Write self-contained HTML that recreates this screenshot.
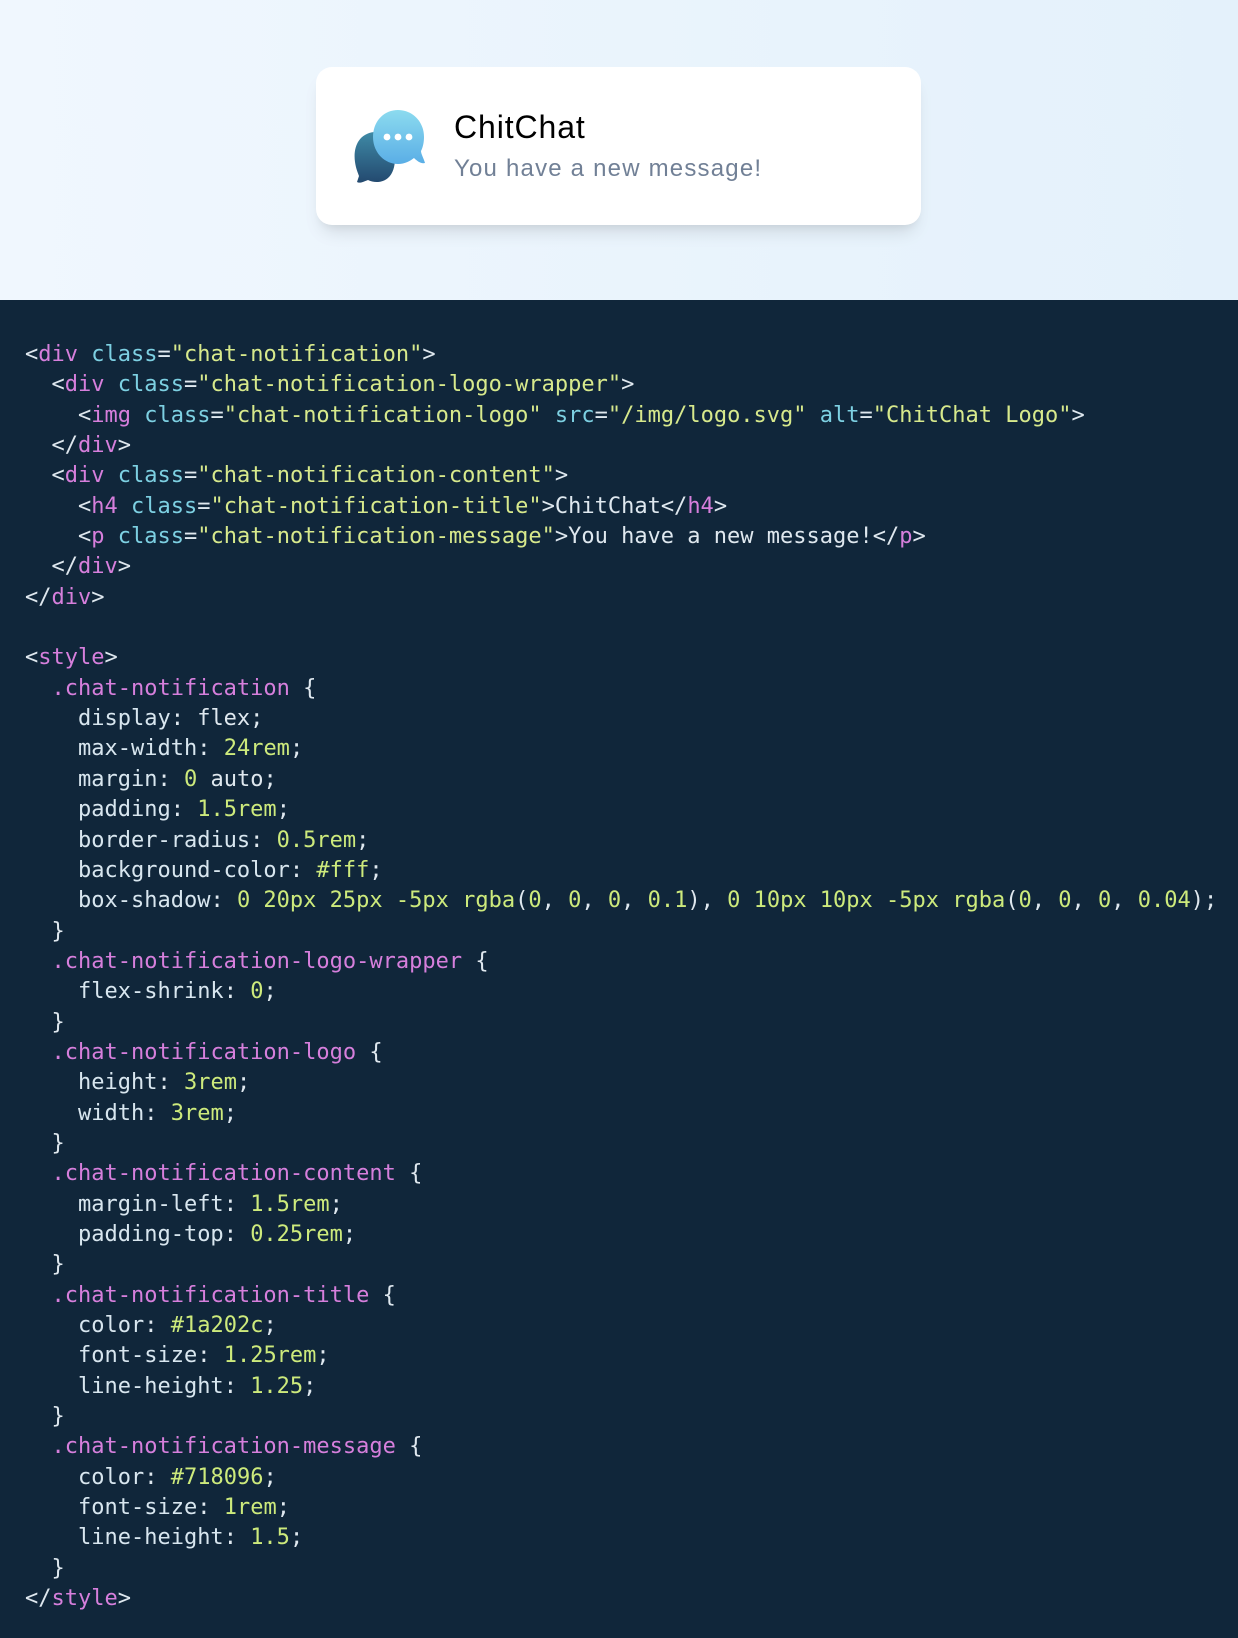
<!DOCTYPE html>
<html><head><meta charset="utf-8"><style>
*{margin:0;padding:0;box-sizing:border-box}
body{width:1238px;height:1638px;overflow:hidden;background:#10263a;font-family:"Liberation Sans",sans-serif}
.top{position:absolute;left:0;top:0;width:1238px;height:300px;background:linear-gradient(90deg,#f0f7fe,#e4f1fb)}
.card{position:absolute;left:316px;top:67px;width:605px;height:158px;background:#fff;border-radius:16px;box-shadow:0 12px 18px -6px rgba(0,0,0,0.12),0 6px 8px -4px rgba(0,0,0,0.05)}
.title{position:absolute;left:454px;top:109px;font-size:32px;letter-spacing:0.9px;color:#000;line-height:36px}
.msg{position:absolute;left:454px;top:154px;font-size:24px;letter-spacing:1.2px;color:#718096;line-height:30px}
pre{position:absolute;left:25px;top:340px;font-family:"DejaVu Sans Mono","Liberation Mono",monospace;font-size:22px;line-height:30.35px;color:#dfe8ef}
.t{color:#d67fdc}.a{color:#7dd0e2}.s{color:#d7e98c}.n{color:#cdea7c}.p{color:#d8e6ef}
</style></head><body>
<div class="top"></div>
<div class="card"></div>
<svg style="position:absolute;left:350px;top:105px" width="82" height="82" viewBox="350 105 82 82">
<defs>
<linearGradient id="g1" x1="0" y1="0" x2="0" y2="1"><stop offset="0" stop-color="#3f8aa6"/><stop offset="1" stop-color="#23496f"/></linearGradient>
<linearGradient id="g2" x1="0" y1="0" x2="0" y2="1"><stop offset="0" stop-color="#8cdbef"/><stop offset="1" stop-color="#5aaee6"/></linearGradient>
</defs>
<path d="M374 132 C358 134 353 148 355 162 C356 169 358 173 359 176 L357 182 C360 184 365 181 368 180 C374 183 382 183 388 178 C395 172 396 160 394 150 Z" fill="url(#g1)"/>
<path d="M398 110 C384 110 373 121 373 137 C373 152 384 164 398 164 C405 164 410 161 414 158 C417 161 421 164 425 163 C424 159 421 154 421 151 C423 147 424 142 424 137 C424 121 412 110 398 110 Z" fill="url(#g2)"/>
<circle cx="387" cy="137" r="3.4" fill="#fff"/><circle cx="398" cy="137" r="3.4" fill="#fff"/><circle cx="409" cy="137" r="3.4" fill="#fff"/>
</svg>
<div class="title">ChitChat</div>
<div class="msg">You have a new message!</div>
<pre>&lt;<span class="t">div</span> <span class="a">class</span>=<span class="s">"chat-notification"</span>&gt;
  &lt;<span class="t">div</span> <span class="a">class</span>=<span class="s">"chat-notification-logo-wrapper"</span>&gt;
    &lt;<span class="t">img</span> <span class="a">class</span>=<span class="s">"chat-notification-logo"</span> <span class="a">src</span>=<span class="s">"/img/logo.svg"</span> <span class="a">alt</span>=<span class="s">"ChitChat Logo"</span>&gt;
  &lt;/<span class="t">div</span>&gt;
  &lt;<span class="t">div</span> <span class="a">class</span>=<span class="s">"chat-notification-content"</span>&gt;
    &lt;<span class="t">h4</span> <span class="a">class</span>=<span class="s">"chat-notification-title"</span>&gt;ChitChat&lt;/<span class="t">h4</span>&gt;
    &lt;<span class="t">p</span> <span class="a">class</span>=<span class="s">"chat-notification-message"</span>&gt;You have a new message!&lt;/<span class="t">p</span>&gt;
  &lt;/<span class="t">div</span>&gt;
&lt;/<span class="t">div</span>&gt;

&lt;<span class="t">style</span>&gt;
  <span class="t">.chat-notification</span> {
    <span class="p">display</span>: flex;
    <span class="p">max-width</span>: <span class="n">24rem</span>;
    <span class="p">margin</span>: <span class="n">0</span> auto;
    <span class="p">padding</span>: <span class="n">1.5rem</span>;
    <span class="p">border-radius</span>: <span class="n">0.5rem</span>;
    <span class="p">background-color</span>: <span class="n">#fff</span>;
    <span class="p">box-shadow</span>: <span class="n">0 20px 25px -5px rgba</span>(<span class="n">0</span>, <span class="n">0</span>, <span class="n">0</span>, <span class="n">0.1</span>), <span class="n">0 10px 10px -5px rgba</span>(<span class="n">0</span>, <span class="n">0</span>, <span class="n">0</span>, <span class="n">0.04</span>);
  }
  <span class="t">.chat-notification-logo-wrapper</span> {
    <span class="p">flex-shrink</span>: <span class="n">0</span>;
  }
  <span class="t">.chat-notification-logo</span> {
    <span class="p">height</span>: <span class="n">3rem</span>;
    <span class="p">width</span>: <span class="n">3rem</span>;
  }
  <span class="t">.chat-notification-content</span> {
    <span class="p">margin-left</span>: <span class="n">1.5rem</span>;
    <span class="p">padding-top</span>: <span class="n">0.25rem</span>;
  }
  <span class="t">.chat-notification-title</span> {
    <span class="p">color</span>: <span class="n">#1a202c</span>;
    <span class="p">font-size</span>: <span class="n">1.25rem</span>;
    <span class="p">line-height</span>: <span class="n">1.25</span>;
  }
  <span class="t">.chat-notification-message</span> {
    <span class="p">color</span>: <span class="n">#718096</span>;
    <span class="p">font-size</span>: <span class="n">1rem</span>;
    <span class="p">line-height</span>: <span class="n">1.5</span>;
  }
&lt;/<span class="t">style</span>&gt;</pre>
</body></html>
